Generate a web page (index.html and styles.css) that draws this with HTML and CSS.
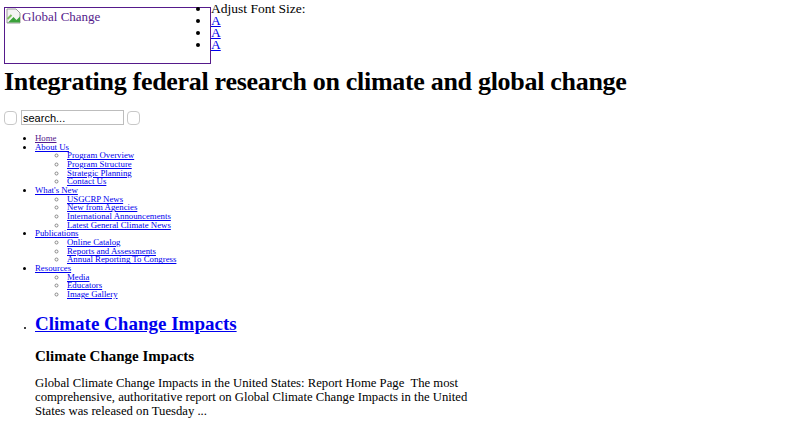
FILE: index.html
```html
<!DOCTYPE html>
<html lang="en">

<head>
    <meta charset="UTF-8">
    <title>Global Change</title>
    <link rel="stylesheet" href="styles.css">
</head>

<body>
    <!-- header: logo + font size -->
    <div class="header">
        <a href="#" class="logo">
            <span class="broken">
                <svg width="16" height="16" viewBox="0 0 16 16">
                    <path d="M1 1h9l4 4v10H1z" fill="#f4f4f4" stroke="#9a9a9a" stroke-width="1"/>
                    <path d="M1.5 15l6-6 3 3 3.5-3.5V14.5H1.5z" fill="#3aa13a"/>
                    <path d="M1.5 11l4-4" stroke="#7bbf5e" stroke-width="2"/>
                </svg>
            </span>Global Change
        </a>
        <ul class="fontsize">
            <li>Adjust Font Size:</li>
            <li><a href="#">A</a></li>
            <li><a href="#">A</a></li>
            <li><a href="#">A</a></li>
        </ul>
    </div>

    <h1 class="title">Integrating federal research on climate and global change</h1>

    <!-- search -->
    <form class="search">
        <span class="knob"></span>
        <input type="text" value="search..." class="search-input">
        <span class="knob"></span>
    </form>

    <!-- nav -->
    <ul class="nav">
        <li><a href="#" class="visited">Home</a></li>
        <li><a href="#">About Us</a>
            <ul>
                <li><a href="#">Program Overview</a></li>
                <li><a href="#">Program Structure</a></li>
                <li><a href="#">Strategic Planning</a></li>
                <li><a href="#">Contact Us</a></li>
            </ul>
        </li>
        <li><a href="#">What's New</a>
            <ul>
                <li><a href="#">USGCRP News</a></li>
                <li><a href="#">New from Agencies</a></li>
                <li><a href="#">International Announcements</a></li>
                <li><a href="#">Latest General Climate News</a></li>
            </ul>
        </li>
        <li><a href="#">Publications</a>
            <ul>
                <li><a href="#">Online Catalog</a></li>
                <li><a href="#">Reports and Assessments</a></li>
                <li><a href="#">Annual Reporting To Congress</a></li>
            </ul>
        </li>
        <li><a href="#">Resources</a>
            <ul>
                <li><a href="#">Media</a></li>
                <li><a href="#">Educators</a></li>
                <li><a href="#">Image Gallery</a></li>
            </ul>
        </li>
    </ul>

    <!-- feature -->
    <ul class="feature">
        <li>
            <h2><a href="#">Climate Change Impacts</a></h2>
            <h3>Climate Change Impacts</h3>
            <p>Global Climate Change Impacts in the United States: Report Home Page&nbsp; The most comprehensive, authoritative report on Global Climate Change Impacts in the United States was released on Tuesday ...</p>
        </li>
    </ul>
</body>

</html>
```

FILE: styles.css
```css
* {
    margin: 0;
    padding: 0;
}

body {
    padding: 0 4px;
    font-family: "Liberation Serif", "Times New Roman", serif;
    color: #000;
    background: #fff;
}

a {
    color: #0000ee;
}

/* header */

.header {
    overflow: hidden;
}

.logo {
    float: left;
    width: 205px;
    height: 55px;
    margin-top: 7px;
    border: 1px solid #551a8b;
    color: #551a8b;
    font-size: 13px;
    line-height: 16px;
    text-decoration: none;
}

.broken {
    display: inline-block;
    width: 16px;
    height: 16px;
    margin-left: 1px;
    vertical-align: -3px;
}

.fontsize {
    font-size: 13.5px;
    line-height: 12px;
    padding-top: 3px;
    list-style: disc;
}

/* title */

.title {
    font-size: 26px;
    line-height: 34px;
    letter-spacing: -0.3px;
    padding-top: 1px;
}

/* search */

.search {
    display: flex;
    align-items: center;
    gap: 3px;
    margin-top: 11px;
    height: 15px;
}

.knob {
    width: 11px;
    height: 12px;
    border: 1px solid #c8c8c8;
    border-radius: 4px;
    background: #fff;
}

.search-input {
    width: 99px;
    height: 13px;
    margin-left: 1px;
    padding: 0 1px;
    border: 1px solid #bdbdbd;
    font-family: "Liberation Sans", Arial, sans-serif;
    font-size: 11px;
    color: #000;
}

/* nav */

.nav {
    margin-top: 9px;
    padding-left: 31px;
    font-size: 8.8px;
    line-height: 8.67px;
    list-style: disc;
}

.nav ul {
    padding-left: 32px;
    list-style: circle;
}

.nav ul li::marker {
    color: #888;
}

.nav .visited {
    color: #551a8b;
}

/* feature */

.feature {
    margin-top: 13px;
    padding-left: 31px;
    list-style: disc;
    font-size: 8px;
}

.feature h2 {
    font-size: 19px;
    line-height: 24px;
}

.feature h3 {
    margin-top: 10px;
    font-size: 15px;
    line-height: 20px;
}

.feature p {
    margin-top: 10px;
    width: 440px;
    font-size: 12.7px;
    line-height: 14px;
}
```
